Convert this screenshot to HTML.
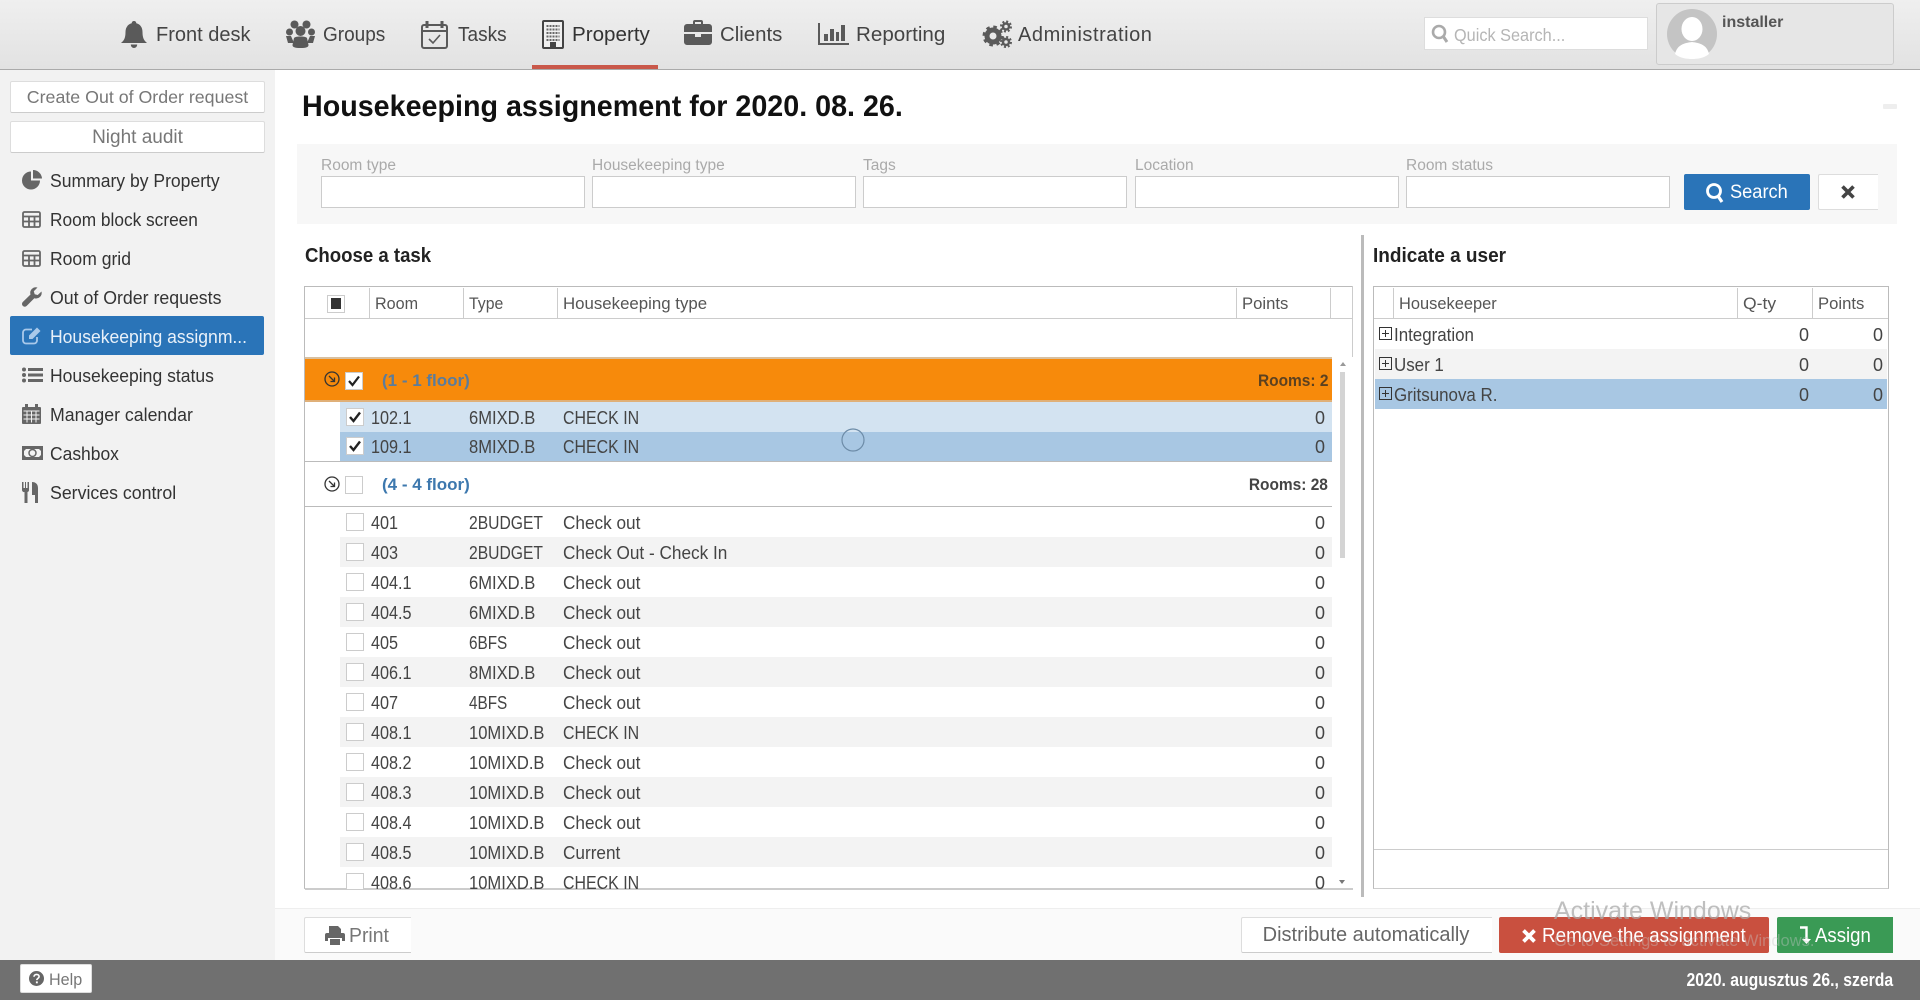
<!DOCTYPE html>
<html lang="en"><head><meta charset="utf-8"><title>Housekeeping assignement</title>
<style>
*{box-sizing:border-box}
html,body{margin:0;padding:0;width:1920px;height:1000px;overflow:hidden;background:#fff;font-family:"Liberation Sans",sans-serif;color:#444}
.a{position:absolute;white-space:nowrap}
svg{position:absolute;overflow:visible}
#top{position:absolute;left:0;top:0;width:1920px;height:70px;background:linear-gradient(#efefef,#e2e2e2);border-bottom:1px solid #aaa}
.nav{position:absolute;top:20px;line-height:30px;font-size:20px;color:#444;white-space:nowrap;transform-origin:0 50%}
.side{position:absolute;left:50px;font-size:18px;line-height:24px;color:#333;white-space:nowrap;transform:scaleX(.975);transform-origin:0 50%;margin-top:1px}
.btn{position:absolute;background:#fff;border:1px solid #ddd;border-bottom-color:#ccc;border-radius:2px;text-align:center;color:#777;white-space:nowrap}
.lab{position:absolute;top:156px;font-size:15.5px;line-height:20px;color:#aaa;white-space:nowrap}
.inp{position:absolute;top:176px;width:264px;height:32px;background:#fff;border:1px solid #ccc}
.hd{position:absolute;top:290px;line-height:28px;font-size:17px;color:#555;white-space:nowrap;transform-origin:0 50%}
.vs{position:absolute;top:288px;width:1px;height:30px;background:#ccc}
.r{position:absolute;left:340px;width:992px;height:30px;line-height:32px;font-size:18px;color:#444}
.r.s{background:#f3f3f3}
.r.l{background:#d3e3f1}
.r.d{background:#a8c7e3}
.cb{position:absolute;left:6px;top:6px;width:18px;height:18px;background:#fff;border:1px solid #ccc}
.n{position:absolute;left:31px;transform:scaleX(.9);transform-origin:0 50%;white-space:nowrap}
.t{position:absolute;left:129px;transform:scaleX(.92);transform-origin:0 50%;white-space:nowrap}
.t.b{transform:scaleX(.87)}
.t.f{transform:scaleX(.85)}
.h{position:absolute;left:223px;white-space:nowrap;transform:scaleX(.955);transform-origin:0 50%}
.h.hc{transform:scaleX(.885)}
.v{position:absolute;right:7px}
.g{position:absolute;left:305px;width:1027px;font-weight:bold;font-size:17px;white-space:nowrap}
.gl{position:absolute;left:77px}
.gr{position:absolute;right:4px;transform:scaleX(.91);transform-origin:100% 50%}
.u{position:absolute;left:1375px;width:512px;height:30px;line-height:32px;font-size:18px;color:#444}
.ub{position:absolute;left:4px;top:8px;width:13px;height:13px;border:1px solid #333;background:linear-gradient(#333,#333) center/7px 1px no-repeat,linear-gradient(#333,#333) center/1px 7px no-repeat}
.ut{position:absolute;left:19px;transform:scaleX(.94);transform-origin:0 50%}
.q{position:absolute;right:78px}.p{position:absolute;right:4px}
</style></head><body>

<!-- top bar -->
<div id="top"></div>
<div class="a" style="left:532px;top:65px;width:126px;height:4px;background:#c9584a"></div>

<svg style="left:121px;top:21px" width="26" height="27" viewBox="0 0 26 27"><path fill="#5a5a5a" d="M13 0c1.400 0 2.300 1 2.300 2.300 4 1 6.200 4.300 6.200 8.700 0 6 1.500 8.500 4.500 11H0c3-2.500 4.500-5 4.500-11 0-4.400 2.200-7.700 6.200-8.700C10.700 1 11.600 0 13 0zM9.800 23.500h6.400c0 2-1.400 3.500-3.200 3.500s-3.200-1.500-3.200-3.500z"/></svg>
<div class="nav" style="left:156px">Front desk</div>

<svg style="left:286px;top:20px" width="29" height="28" viewBox="0 0 29 28" fill="#5a5a5a"><circle cx="8.500" cy="4.500" r="4"/><circle cx="20.500" cy="4.500" r="4"/><circle cx="3.500" cy="12" r="3.500"/><circle cx="25.500" cy="12" r="3.500"/><circle cx="14.500" cy="11" r="5"/><path d="M0 16h5l3 7H2zM29 16h-5l-3 7h6z"/><path d="M8 18c1-1 2.500-1.500 6.500-1.500s5.500.5 6.500 1.500l1.500 7c0 2-2 3-8 3s-8-1-8-3z"/></svg>
<div class="nav" style="left:323px;transform:scaleX(.95)">Groups</div>

<svg style="left:421px;top:20px" width="27" height="29" viewBox="0 0 27 29" fill="none" stroke="#5a5a5a"><rect x="1" y="5" width="25" height="23" rx="2" stroke-width="2"/><path d="M1 11h25" stroke-width="2"/><path d="M6 1v7M21 1v7" stroke-width="3"/><path d="M8 19l4 4 7-8" stroke-width="1.600"/></svg>
<div class="nav" style="left:458px;transform:scaleX(.95)">Tasks</div>

<svg style="left:542px;top:20px" width="22" height="29" viewBox="0 0 22 29"><rect x="1" y="1" width="20" height="27" rx="1" fill="#f0f0f0" stroke="#444" stroke-width="2"/><path stroke="#666" stroke-width="2" stroke-dasharray="2 1" d="M4.500 6h13M4.500 9.500h13M4.500 13h13M4.500 16.500h13M4.500 20h13"/><rect x="8" y="22" width="6" height="6" fill="#444"/></svg>
<div class="nav" style="left:572px;color:#333;transform:scaleX(1.03)">Property</div>

<svg style="left:684px;top:20px" width="28" height="25" viewBox="0 0 28 25" fill="#5a5a5a"><path d="M9 4V2a2 2 0 0 1 2-2h6a2 2 0 0 1 2 2v2h6a3 3 0 0 1 3 3v5H0V7a3 3 0 0 1 3-3zM11 2v2h6V2zM0 14h11v3h6v-3h11v8a3 3 0 0 1-3 3H3a3 3 0 0 1-3-3z"/></svg>
<div class="nav" style="left:720px;transform:scaleX(1.02)">Clients</div>

<svg style="left:818px;top:23px" width="31" height="23" viewBox="0 0 31 23" fill="#5a5a5a"><path d="M0 0h2v20h29v2H0z"/><rect x="6" y="11" width="4" height="7"/><rect x="12" y="6" width="4" height="12"/><rect x="18" y="9" width="3" height="9"/><rect x="23" y="2" width="4" height="16"/></svg>
<div class="nav" style="left:856px;transform:scaleX(1.03)">Reporting</div>

<svg style="left:982px;top:20px" width="30" height="28" viewBox="0 0 30 28" fill="none" stroke="#5a5a5a"><circle cx="11" cy="16" r="6" stroke-width="5"/><circle cx="11" cy="16" r="9" stroke-width="3" stroke-dasharray="3.500 3.570"/><circle cx="24" cy="6.500" r="3" stroke-width="2.500"/><circle cx="24" cy="6.500" r="5" stroke-width="2" stroke-dasharray="2 1.930"/><circle cx="24" cy="22" r="3" stroke-width="2.500"/><circle cx="24" cy="22" r="5" stroke-width="2" stroke-dasharray="2 1.930"/></svg>
<div class="nav" style="left:1018px;letter-spacing:.55px">Administration</div>

<div class="a" style="left:1424px;top:17px;width:224px;height:33px;background:#fff;border:1px solid #ddd"></div>
<svg style="left:1431px;top:24px" width="18" height="20" viewBox="0 0 18 20" fill="none" stroke="#aaa"><circle cx="8" cy="8" r="6" stroke-width="2.600"/><path d="M12 12l4 6" stroke-width="3"/></svg>
<div class="a" style="left:1454px;top:20px;line-height:30px;font-size:17.500px;color:#b5b5b5;transform:scaleX(.93);transform-origin:0 50%">Quick Search...</div>

<div class="a" style="left:1656px;top:3px;width:238px;height:62px;background:#e6e6e6;border:1px solid #ccc;border-radius:3px"></div>
<svg style="left:1667px;top:9px" width="50" height="50" viewBox="0 0 50 50"><circle cx="25" cy="25" r="25" fill="#c4c4c4"/><ellipse cx="25" cy="20" rx="10.500" ry="12" fill="#fff"/><path d="M8 45c2-9 9-11 17-12 8 1 15 3 17 12-5 4-11 5-17 5s-12-1-17-5z" fill="#fff"/></svg>
<div class="a" style="left:1722px;top:13px;font-weight:bold;font-size:16px;line-height:20px;color:#555">installer</div>

<!-- sidebar -->
<div class="a" style="left:0;top:70px;width:275px;height:890px;background:#f2f2f2"></div>
<div class="btn" style="left:10px;top:81px;width:255px;height:32px;line-height:31px;font-size:17.800px;color:#777">Create Out of Order request</div>
<div class="btn" style="left:10px;top:121px;width:255px;height:32px;line-height:31px;font-size:19px;color:#777">Night audit</div>

<svg style="left:22px;top:170px" width="20" height="20" viewBox="0 0 20 20" fill="#666"><path d="M9 10.500V1.500a9 9 0 1 0 9 9z"/><path d="M11 0v8.500h9A9 9 0 0 0 11 0z"/></svg>
<div class="side" style="top:168px">Summary by Property</div>

<svg style="left:22px;top:211px" width="19" height="17" viewBox="0 0 19 17" fill="none" stroke="#666" stroke-width="1.800"><rect x="1" y="1" width="17" height="15" rx="1.500"/><path d="M1 5.500h17M1 10.500h17M7 5.500V16M12.500 5.500V16"/></svg>
<div class="side" style="top:207px;transform:scaleX(.96)">Room block screen</div>

<svg style="left:22px;top:250px" width="19" height="17" viewBox="0 0 19 17" fill="none" stroke="#666" stroke-width="1.800"><rect x="1" y="1" width="17" height="15" rx="1.500"/><path d="M1 5.500h17M1 10.500h17M7 5.500V16M12.500 5.500V16"/></svg>
<div class="side" style="top:246px">Room grid</div>

<svg style="left:22px;top:287px" width="20" height="20" viewBox="0 0 20 20" fill="#666"><path d="M19.500 4.500l-3.800 3.500-3-.8-.9-3L15.500.5a5.600 5.600 0 0 0-7 7L.8 15a2.700 2.700 0 0 0 3.900 3.900l7.600-7.700a5.600 5.600 0 0 0 7.200-6.700z"/></svg>
<div class="side" style="top:285px;transform:scaleX(.985)">Out of Order requests</div>

<div class="a" style="left:10px;top:316px;width:254px;height:39px;background:#2a74b8;border-radius:2px"></div>
<svg style="left:22px;top:326px" width="21" height="19" viewBox="0 0 21 19" fill="none" stroke="#a9c9ea" stroke-width="1.800"><path d="M10 3.500H4A3 3 0 0 0 1 6.500v8a3 3 0 0 0 3 3h8a3 3 0 0 0 3-3V11"/><path d="M7 9.500l8-8 3.500 3.500-8 8H7z" fill="#a9c9ea" stroke="none"/></svg>
<div class="side" style="top:324px;color:#e9f1f9">Housekeeping assignm...</div>

<svg style="left:22px;top:367px" width="21" height="16" viewBox="0 0 21 16" fill="#666"><circle cx="2" cy="2.500" r="2"/><circle cx="2" cy="8" r="2"/><circle cx="2" cy="13.500" r="2"/><rect x="6" y="1" width="15" height="3"/><rect x="6" y="6.500" width="15" height="3"/><rect x="6" y="12" width="15" height="3"/></svg>
<div class="side" style="top:363px">Housekeeping status</div>

<svg style="left:22px;top:404px" width="19" height="20" viewBox="0 0 19 20"><path fill="#666" d="M3 0h3v3h7V0h3v3h2a1 1 0 0 1 1 1v15a1 1 0 0 1-1 1H1a1 1 0 0 1-1-1V4a1 1 0 0 1 1-1h2z"/><path stroke="#f2f2f2" stroke-width="1" d="M1.500 7h16M1.500 11h16M1.500 15h16M5 7v11.500M9.500 7v11.500M14 7v11.500" fill="none"/></svg>
<div class="side" style="top:402px;transform:scaleX(.985)">Manager calendar</div>

<svg style="left:22px;top:445px" width="21" height="16" viewBox="0 0 21 16" fill="none"><path fill="#666" fill-rule="evenodd" d="M0 1h21v14H0zM4 4L2 6v4l2 2h13l2-2V6l-2-2z"/><circle cx="10.500" cy="8" r="3.500" stroke="#666" stroke-width="1.500"/></svg>
<div class="side" style="top:441px;transform:scaleX(.97)">Cashbox</div>

<svg style="left:22px;top:482px" width="16" height="21" viewBox="0 0 16 21" fill="#666"><path d="M0 0h1.500v6H3V0h1v6h1.500V0H7v8a2 2 0 0 1-1.500 2v11h-3V10A2 2 0 0 1 0 8zM10 0c3 0 6 1.500 6 6v15h-3v-8h-3z"/></svg>
<div class="side" style="top:480px;transform:scaleX(.985)">Services control</div>

<!-- title -->
<div class="a" id="title" style="left:302px;top:88px;font-size:29.500px;line-height:38px;font-weight:bold;color:#111;transform:scaleX(.972);transform-origin:0 50%">Housekeeping assignement for 2020. 08. 26.</div>
<div class="a" style="left:1883px;top:104px;width:14px;height:5px;background:#eee;border-radius:1px"></div>

<!-- filter panel -->
<div class="a" style="left:297px;top:144px;width:1600px;height:80px;background:#f7f7f7"></div>
<div class="lab" style="left:321px">Room type</div>
<div class="lab" style="left:592px">Housekeeping type</div>
<div class="lab" style="left:863px">Tags</div>
<div class="lab" style="left:1135px">Location</div>
<div class="lab" style="left:1406px">Room status</div>
<div class="inp" style="left:321px"></div>
<div class="inp" style="left:592px"></div>
<div class="inp" style="left:863px"></div>
<div class="inp" style="left:1135px"></div>
<div class="inp" style="left:1406px"></div>
<div class="a" style="left:1684px;top:174px;width:126px;height:36px;background:#2a74b8;border-radius:2px"></div>
<svg style="left:1705px;top:182px" width="20" height="22" viewBox="0 0 20 22" fill="none" stroke="#fff"><circle cx="9" cy="9" r="6.500" stroke-width="2.800"/><path d="M13 14l4 6" stroke-width="3.200"/></svg>
<div class="a" style="left:1730px;top:178px;line-height:30px;font-size:19px;color:#fff;transform:scaleX(.96);transform-origin:0 50%">Search</div>
<div class="a" style="left:1818px;top:174px;width:60px;height:36px;background:#fff;border:1px solid #ddd;border-right:0;border-radius:2px 0 0 2px"></div>
<svg style="left:1841px;top:185px" width="14" height="14" viewBox="0 0 14 14" stroke="#444" stroke-width="3.600"><path d="M1.500 1.500l11 11M12.500 1.500l-11 11"/></svg>

<!-- divider -->
<div class="a" style="left:1361px;top:235px;width:3px;height:662px;background:#bbb"></div>

<div class="a" style="left:305px;top:244px;font-size:20px;line-height:24px;font-weight:bold;color:#222;transform:scaleX(.93);transform-origin:0 50%">Choose a task</div>
<div class="a" style="left:1373px;top:244px;font-size:20px;line-height:24px;font-weight:bold;color:#222;transform:scaleX(.95);transform-origin:0 50%">Indicate a user</div>

<!-- left grid frame -->
<div class="a" style="left:304px;top:286px;width:1049px;height:603px;border:1px solid #bbb;border-top-color:#bbb;border-bottom:1px solid #ccc;border-right:0"></div>
<div class="a" style="left:1352px;top:286px;width:1px;height:71px;background:#ccc"></div>
<div class="a" style="left:305px;top:318px;width:1048px;height:1px;background:#ccc"></div>
<div class="a" style="left:327px;top:295px;width:18px;height:18px;background:#fff;border:1px solid #ccc"></div>
<div class="a" style="left:331px;top:298px;width:10px;height:11px;background:#333"></div>
<div class="vs" style="left:369px"></div><div class="vs" style="left:463px"></div><div class="vs" style="left:557px"></div><div class="vs" style="left:1236px"></div><div class="vs" style="left:1330px"></div>
<div class="hd" style="left:375px;transform:scaleX(.95)">Room</div>
<div class="hd" style="left:469px;transform:scaleX(.93)">Type</div>
<div class="hd" style="left:563px;transform:scaleX(.99)">Housekeeping type</div>
<div class="hd" style="left:1242px;transform:scaleX(.98)">Points</div>

<!-- group 1 -->
<div class="g" style="top:357px;height:45px;line-height:43px;background:#f78a0b;border-top:2px solid #d8c0a0;border-bottom:2px solid #e0b078;color:#5f4a2c">
 <span class="gl" style="color:#5b7c9c">(1 - 1 floor)</span><span class="gr" style="color:#5c4120">Rooms: 2</span>
</div>
<svg style="left:324px;top:371px" width="16" height="16" viewBox="0 0 16 16" fill="none" stroke="#333" stroke-width="1.300"><circle cx="8" cy="8" r="7"/><path d="M5 5l5.500 5.500M10.500 6.500v4h-4"/></svg>
<div class="a" style="left:345px;top:372px;width:18px;height:18px;background:#fff;border:1px solid #ccc"></div>
<svg style="left:345px;top:372px" width="18" height="18" viewBox="0 0 18 18" fill="none" stroke="#222" stroke-width="2.200"><path d="M4 9l3.500 4L14 4.500"/></svg>

<div class="r l" style="top:402px"><i class="cb"></i><svg style="left:6px;top:6px" width="18" height="18" viewBox="0 0 18 18" fill="none" stroke="#222" stroke-width="2.400"><path d="M4 9l3.500 4L14 4.500"/></svg><span class="n">102.1</span><span class="t">6MIXD.B</span><span class="h hc">CHECK IN</span><span class="v">0</span></div>
<div class="r d" style="top:432px;height:29px;line-height:31px"><i class="cb" style="top:5px"></i><svg style="left:6px;top:5px" width="18" height="18" viewBox="0 0 18 18" fill="none" stroke="#222" stroke-width="2.400"><path d="M4 9l3.500 4L14 4.500"/></svg><span class="n">109.1</span><span class="t">8MIXD.B</span><span class="h hc">CHECK IN</span><span class="v">0</span></div>
<svg style="left:841px;top:428px" width="24" height="24" viewBox="0 0 24 24" fill="none" stroke="#6d8ca8" stroke-width="1.200"><circle cx="12" cy="12" r="11"/></svg>

<!-- group 4 -->
<div class="g" style="top:461px;height:46px;line-height:46px;background:#fff;border-top:1px solid #bbb;border-bottom:1px solid #bbb">
 <span class="gl" style="color:#3d78ae">(4 - 4 floor)</span><span class="gr" style="color:#444">Rooms: 28</span>
</div>
<svg style="left:324px;top:476px" width="16" height="16" viewBox="0 0 16 16" fill="none" stroke="#333" stroke-width="1.300"><circle cx="8" cy="8" r="7"/><path d="M5 5l5.500 5.500M10.500 6.500v4h-4"/></svg>
<div class="a" style="left:345px;top:476px;width:18px;height:18px;background:#fff;border:1px solid #ccc"></div>

<div class="r" style="top:507px"><i class="cb"></i><span class="n">401</span><span class="t b">2BUDGET</span><span class="h">Check out</span><span class="v">0</span></div>
<div class="r s" style="top:537px"><i class="cb"></i><span class="n">403</span><span class="t b">2BUDGET</span><span class="h">Check Out - Check In</span><span class="v">0</span></div>
<div class="r" style="top:567px"><i class="cb"></i><span class="n">404.1</span><span class="t">6MIXD.B</span><span class="h">Check out</span><span class="v">0</span></div>
<div class="r s" style="top:597px"><i class="cb"></i><span class="n">404.5</span><span class="t">6MIXD.B</span><span class="h">Check out</span><span class="v">0</span></div>
<div class="r" style="top:627px"><i class="cb"></i><span class="n">405</span><span class="t f">6BFS</span><span class="h">Check out</span><span class="v">0</span></div>
<div class="r s" style="top:657px"><i class="cb"></i><span class="n">406.1</span><span class="t">8MIXD.B</span><span class="h">Check out</span><span class="v">0</span></div>
<div class="r" style="top:687px"><i class="cb"></i><span class="n">407</span><span class="t f">4BFS</span><span class="h">Check out</span><span class="v">0</span></div>
<div class="r s" style="top:717px"><i class="cb"></i><span class="n">408.1</span><span class="t">10MIXD.B</span><span class="h hc">CHECK IN</span><span class="v">0</span></div>
<div class="r" style="top:747px"><i class="cb"></i><span class="n">408.2</span><span class="t">10MIXD.B</span><span class="h">Check out</span><span class="v">0</span></div>
<div class="r s" style="top:777px"><i class="cb"></i><span class="n">408.3</span><span class="t">10MIXD.B</span><span class="h">Check out</span><span class="v">0</span></div>
<div class="r" style="top:807px"><i class="cb"></i><span class="n">408.4</span><span class="t">10MIXD.B</span><span class="h">Check out</span><span class="v">0</span></div>
<div class="r s" style="top:837px"><i class="cb"></i><span class="n">408.5</span><span class="t">10MIXD.B</span><span class="h">Current</span><span class="v">0</span></div>
<div class="r" style="top:867px"><i class="cb"></i><span class="n">408.6</span><span class="t">10MIXD.B</span><span class="h hc">CHECK IN</span><span class="v">0</span></div>

<!-- scrollbar -->
<div class="a" style="left:1340px;top:372px;width:5px;height:186px;background:#d4d4d4"></div>
<div class="a" style="left:1340px;top:362px;width:0;height:0;border:3.500px solid transparent;border-bottom:4px solid #999;border-top:0"></div>
<div class="a" style="left:1339px;top:880px;width:0;height:0;border:3.500px solid transparent;border-top:4px solid #777;border-bottom:0"></div>

<div class="a" style="left:305px;top:889px;width:1048px;height:1px;background:#ccc"></div>
<div class="a" style="left:305px;top:890px;width:1056px;height:18px;background:#fff"></div>
<div class="a" style="left:1361px;top:890px;width:3px;height:7px;background:#bbb"></div>

<!-- right grid -->
<div class="a" style="left:1373px;top:286px;width:516px;height:603px;border:1px solid #bbb;border-bottom-color:#ccc"></div>
<div class="a" style="left:1374px;top:318px;width:514px;height:1px;background:#ccc"></div>
<div class="a" style="left:1374px;top:849px;width:514px;height:1px;background:#ccc"></div>
<div class="vs" style="left:1393px"></div><div class="vs" style="left:1737px"></div><div class="vs" style="left:1812px"></div>
<div class="hd" style="left:1399px;transform:scaleX(.967)">Housekeeper</div>
<div class="hd" style="left:1743px;transform:scaleX(1.03)">Q-ty</div>
<div class="hd" style="left:1818px;transform:scaleX(.98)">Points</div>

<div class="u" style="top:319px"><i class="ub"></i><span class="ut">Integration</span><span class="q">0</span><span class="p">0</span></div>
<div class="u" style="top:349px;background:#f3f3f3"><i class="ub"></i><span class="ut">User 1</span><span class="q">0</span><span class="p">0</span></div>
<div class="u" style="top:379px;background:#a8c7e3"><i class="ub"></i><span class="ut">Gritsunova R.</span><span class="q">0</span><span class="p">0</span></div>

<!-- footer -->
<div class="a" style="left:275px;top:908px;width:1645px;height:52px;background:#fafafa;border-top:1px solid #eee"></div>
<div class="btn" style="left:304px;top:917px;width:107px;height:36px;border-right:0;border-radius:2px 0 0 2px"></div>
<svg style="left:325px;top:926px" width="20" height="19" viewBox="0 0 20 19" fill="#666"><path d="M4 0h9l3 3v5H4zM0 9a2 2 0 0 1 2-2h16a2 2 0 0 1 2 2v6h-3v-3H3v3H0z"/><rect x="5" y="13" width="10" height="6"/></svg>
<div class="a" style="left:349px;top:921px;line-height:30px;font-size:20px;color:#777;transform:scaleX(.97);transform-origin:0 50%">Print</div>

<div class="btn" style="left:1241px;top:917px;width:251px;height:36px;border-right:0;line-height:35px;font-size:20px;color:#666;border-radius:2px 0 0 2px;text-indent:-2px">Distribute automatically</div>
<div class="a" style="left:1499px;top:917px;width:270px;height:36px;background:#c9503f;border-radius:2px"></div>
<svg style="left:1522px;top:929px" width="14" height="14" viewBox="0 0 14 14" stroke="#fff" stroke-width="3.800"><path d="M1.500 1.500l11 11M12.500 1.500l-11 11"/></svg>
<div class="a" style="left:1542px;top:921px;line-height:30px;font-size:20px;color:#fff;transform:scaleX(.945);transform-origin:0 50%">Remove the assignment</div>
<div class="a" style="left:1777px;top:917px;width:116px;height:36px;background:#3a9a55;border-radius:2px 0 0 2px"></div>
<svg style="left:1799px;top:926px" width="12" height="19" viewBox="0 0 12 19" fill="none" stroke="#fff" stroke-width="2.400"><path d="M1 1.500h6.500V15"/><path d="M3 13l4.500 5 4.500-5" fill="#fff" stroke="none"/></svg>
<div class="a" style="left:1815px;top:921px;line-height:30px;font-size:20px;color:#fff;transform:scaleX(.93);transform-origin:0 50%">Assign</div>

<!-- bottom bar -->
<div class="a" style="left:0;top:960px;width:1920px;height:40px;background:#707070"></div>
<div class="btn" style="left:20px;top:964px;width:72px;height:29px;border:1px solid #ddd"></div>
<svg style="left:29px;top:971px" width="15" height="15" viewBox="0 0 15 15"><circle cx="7.500" cy="7.500" r="7.500" fill="#666"/><path d="M5 5.800c0-1.500 1.100-2.400 2.600-2.400s2.500.9 2.500 2.200c0 1.800-2.300 1.800-2.300 3.500" fill="none" stroke="#fff" stroke-width="1.600"/><rect x="6.900" y="10.400" width="1.900" height="1.900" fill="#fff"/></svg>
<div class="a" style="left:49px;top:966px;line-height:28px;font-size:17px;color:#777;transform:scaleX(.95);transform-origin:0 50%">Help</div>
<div class="a" style="right:27px;top:966px;line-height:28px;font-size:18px;font-weight:bold;color:#fff;transform:scaleX(.875);transform-origin:100% 50%">2020. augusztus 26., szerda</div>

<!-- watermark -->
<div class="a" style="left:1554px;top:896px;line-height:30px;font-size:25px;color:rgba(170,170,170,.75)">Activate Windows</div>
<div class="a" style="left:1554px;top:931px;line-height:20px;font-size:16.500px;color:rgba(200,200,200,.4)">Go to Settings to activate Windows.</div>

</body></html>
